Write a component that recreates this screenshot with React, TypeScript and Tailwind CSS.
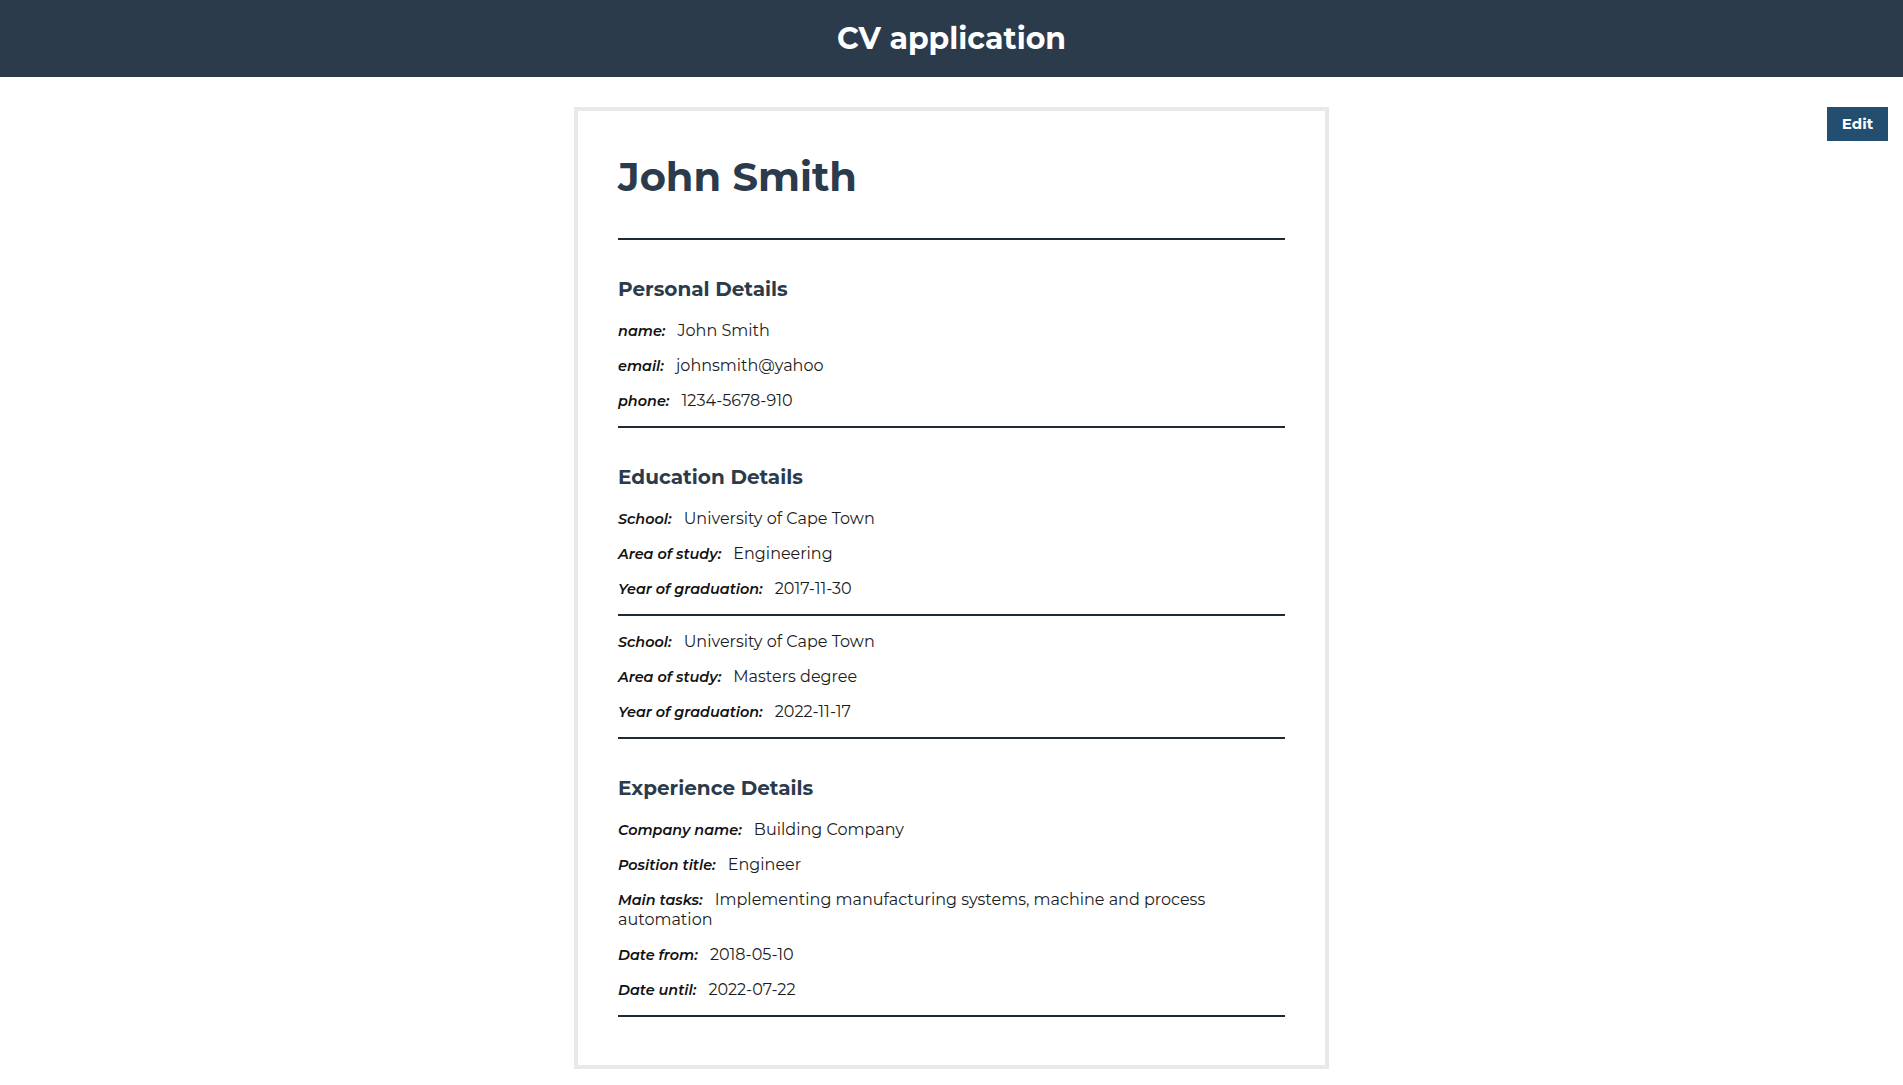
import React from "react";

type Field = { label: string; value: string };

const personal: Field[] = [
  { label: "name:", value: "John Smith" },
  { label: "email:", value: "johnsmith@yahoo" },
  { label: "phone:", value: "1234-5678-910" },
];

const education: Field[][] = [
  [
    { label: "School:", value: "University of Cape Town" },
    { label: "Area of study:", value: "Engineering" },
    { label: "Year of graduation:", value: "2017-11-30" },
  ],
  [
    { label: "School:", value: "University of Cape Town" },
    { label: "Area of study:", value: "Masters degree" },
    { label: "Year of graduation:", value: "2022-11-17" },
  ],
];

const experience: Field[][] = [
  [
    { label: "Company name:", value: "Building Company" },
    { label: "Position title:", value: "Engineer" },
    { label: "Main tasks:", value: "Implementing manufacturing systems, machine and process automation" },
    { label: "Date from:", value: "2018-05-10" },
    { label: "Date until:", value: "2022-07-22" },
  ],
];

function Divider() {
  return <div className="h-[2px] bg-[#1f2a36]" />;
}

function Rows({ fields, first }: { fields: Field[]; first?: boolean }) {
  return (
    <div className={`flex flex-col gap-[15px] pb-[15px] ${first ? "" : "pt-[16px]"}`}>
      {fields.map((f) => (
        <p key={f.label} className="text-[16px] leading-5 text-[#1c1c1c]">
          <span className="mr-2 text-[14.4px] font-semibold italic text-[#111]">{f.label}</span> {f.value}
        </p>
      ))}
    </div>
  );
}

function Section({ title, entries }: { title: string; entries: Field[][] }) {
  return (
    <section className="pt-[35px]">
      <h3 className="mb-[18px] text-[20px] font-bold leading-7 text-[#2b3b4b]">{title}</h3>
      {entries.map((e, i) => (
        <div key={i}>
          <Rows fields={e} first={i === 0} />
          <Divider />
        </div>
      ))}
    </section>
  );
}

export default function App() {
  return (
    <div className="min-h-screen bg-white font-['Montserrat','Open_Sans',sans-serif]">
      <header className="flex h-[77px] items-center justify-center bg-[#2b3b4b]">
        <h1 className="text-[30px] font-bold text-white">CV application</h1>
      </header>

      <main className="grid grid-cols-[1fr_755px_1fr] pt-[30px]">
        <div />
        <article className="border-4 border-[#ebe8e8] px-10 pt-10 pb-12">
          <h2 className="mb-[35px] text-[40px] font-bold leading-[52px] text-[#2b3b4b]">John Smith</h2>
          <Divider />
          <Section title="Personal Details" entries={[personal]} />
          <Section title="Education Details" entries={education} />
          <Section title="Experience Details" entries={experience} />
        </article>
        <div className="flex items-start justify-end pr-[15px]">
          <button className="h-[34px] w-[61px] bg-[#234e6f] text-[15px] font-bold text-white">Edit</button>
        </div>
      </main>
    </div>
  );
}
